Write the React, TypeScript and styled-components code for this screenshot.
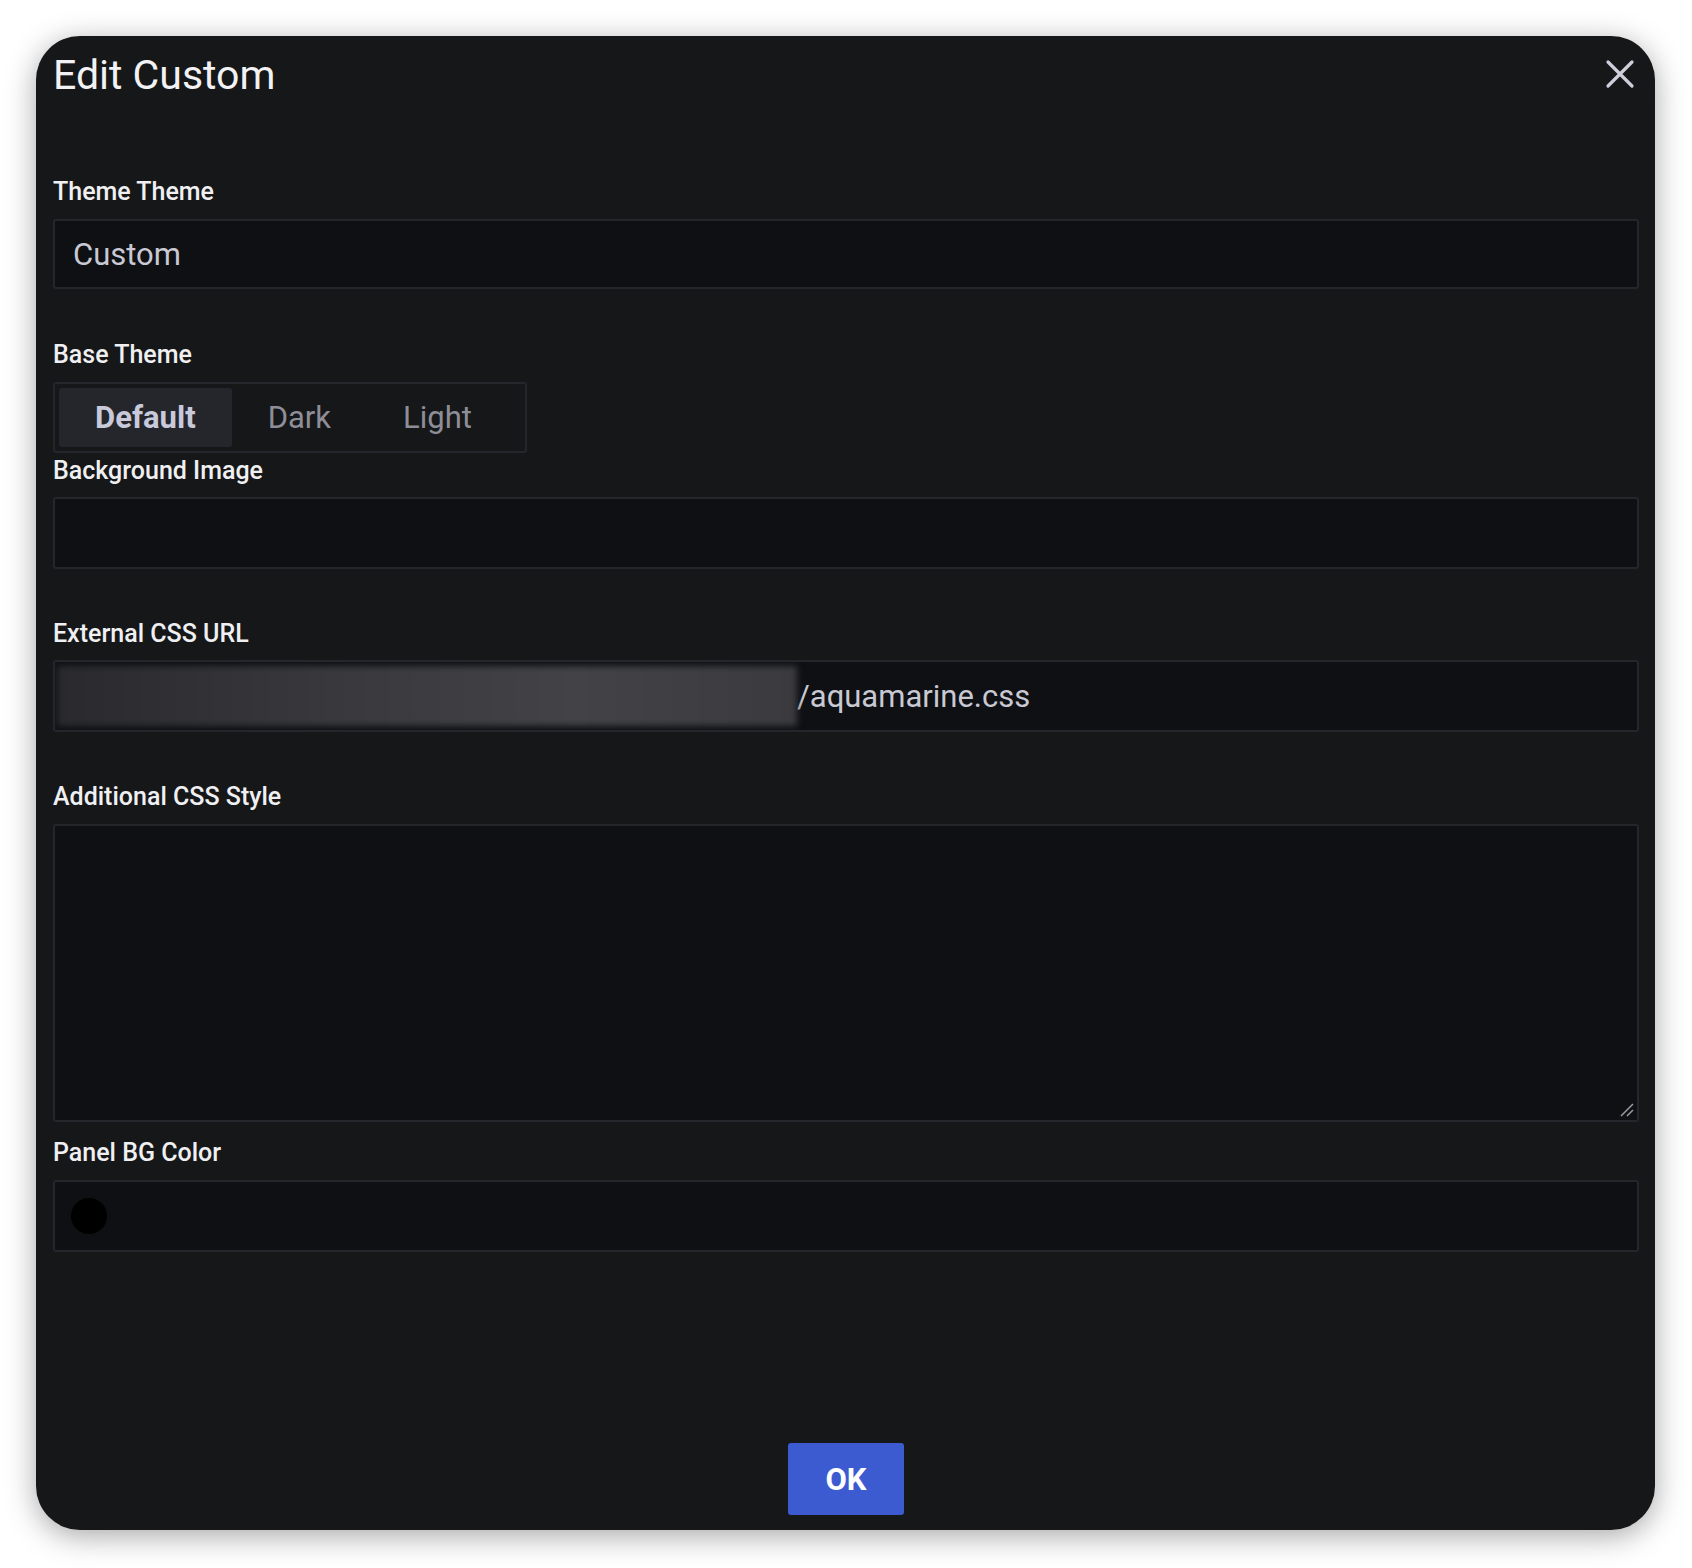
import React, { useState } from 'react';
import styled, { createGlobalStyle } from 'styled-components';

const GlobalStyle = createGlobalStyle`
  html, body {
    margin: 0;
    background: #ffffff;
    font-family: Roboto, "Liberation Sans", sans-serif;
  }
  * { box-sizing: border-box; }
`;

const Page = styled.div`
  padding: 36px 37px 38px 36px;
`;

const Modal = styled.div`
  height: 1494px;
  background: #161719;
  border-radius: 44px;
  box-shadow: 0 6px 30px rgba(0, 0, 0, 0.35);
  padding: 0 16px 15px 17px;
  display: flex;
  flex-direction: column;
`;

const Header = styled.div`
  height: 140px;
  display: flex;
  justify-content: space-between;
  align-items: flex-start;
  padding-top: 14px;
`;

const Title = styled.h1`
  margin: 0;
  font-size: 41px;
  font-weight: 400;
  color: #f2f2f4;
  line-height: 50px;
`;

const CloseButton = styled.button`
  background: none;
  border: none;
  padding: 0;
  margin: 9px 4px 0 0;
  width: 30px;
  height: 30px;
  cursor: pointer;
`;

const Field = styled.div<{ $top: number }>`
  margin-top: ${p => p.$top}px;
  display: flex;
  flex-direction: column;
`;

const Label = styled.label<{ $gap: number }>`
  font-size: 25px;
  font-weight: 500;
  line-height: 32px;
  color: #f0f0f2;
  margin-bottom: ${p => p.$gap}px;
`;

const Input = styled.div<{ $h?: number }>`
  height: ${p => p.$h ?? 72}px;
  background: #0f1014;
  border: 2px solid #25262b;
  border-radius: 3px;
  display: flex;
  align-items: center;
  font-size: 31px;
  color: #c9c9d3;
  position: relative;
  overflow: hidden;
`;

const InputText = styled.span<{ $pad: number }>`
  padding-left: ${p => p.$pad}px;
`;

const Blur = styled.div`
  width: 740px;
  height: 60px;
  margin-left: 2px;
  background: linear-gradient(90deg, #2a2a2e, #39393e 40%, #424247 70%, #3a3a3f);
  filter: blur(3px);
`;

const Segmented = styled.div`
  width: 474px;
  height: 71px;
  border: 2px solid #25262b;
  border-radius: 3px;
  padding: 4px;
  display: flex;
  gap: 0;
`;

const Segment = styled.button<{ $active: boolean }>`
  border: none;
  border-radius: 3px;
  background: ${p => (p.$active ? '#25262b' : 'transparent')};
  color: ${p => (p.$active ? '#c9c9dc' : '#8e8e98')};
  font-family: Roboto, "Liberation Sans", sans-serif;
  font-size: 31px;
  font-weight: ${p => (p.$active ? 700 : 400)};
  padding: 0 36px;
  height: 59px;
  cursor: pointer;
`;

const Resize = styled.svg`
  position: absolute;
  right: 3px;
  bottom: 3px;
`;

const Swatch = styled.span`
  width: 36px;
  height: 36px;
  border-radius: 50%;
  background: #000;
  margin-left: 16px;
`;

const Footer = styled.div`
  margin-top: auto;
  display: flex;
  justify-content: center;
`;

const OkButton = styled.button`
  width: 116px;
  height: 72px;
  background: #3d5bd0;
  border: none;
  border-radius: 3px;
  color: #ffffff;
  font-family: Roboto, "Liberation Sans", sans-serif;
  font-size: 31px;
  font-weight: 700;
  cursor: pointer;
`;

const themes = ['Default', 'Dark', 'Light'];

const App = () => {
  const [base, setBase] = useState('Default');

  return (
    <Page>
      <GlobalStyle />
      <Modal>
        <Header>
          <Title>Edit Custom</Title>
          <CloseButton aria-label="close">
            <svg width="30" height="30" viewBox="0 0 30 30">
              <path d="M3 3 L27 27 M27 3 L3 27" stroke="#cfcfdc" strokeWidth="3.2" strokeLinecap="round" />
            </svg>
          </CloseButton>
        </Header>

        <Field $top={0}>
          <Label $gap={11}>Theme Theme</Label>
          <Input $h={70}>
            <InputText $pad={18}>Custom</InputText>
          </Input>
        </Field>

        <Field $top={50}>
          <Label $gap={11}>Base Theme</Label>
          <Segmented>
            {themes.map(t => (
              <Segment key={t} $active={base === t} onClick={() => setBase(t)}>
                {t}
              </Segment>
            ))}
          </Segmented>
        </Field>

        <Field $top={2}>
          <Label $gap={10}>Background Image</Label>
          <Input />
        </Field>

        <Field $top={49}>
          <Label $gap={10}>External CSS URL</Label>
          <Input>
            <Blur />
            <InputText $pad={0}>/aquamarine.css</InputText>
          </Input>
        </Field>

        <Field $top={49}>
          <Label $gap={11}>Additional CSS Style</Label>
          <Input $h={298}>
            <Resize width="16" height="16" viewBox="0 0 16 16">
              <path d="M15 3 L3 15 M15 9 L9 15" stroke="#9a9aa4" strokeWidth="1.5" />
            </Resize>
          </Input>
        </Field>

        <Field $top={15}>
          <Label $gap={11}>Panel BG Color</Label>
          <Input>
            <Swatch />
          </Input>
        </Field>

        <Footer>
          <OkButton>OK</OkButton>
        </Footer>
      </Modal>
    </Page>
  );
};

export default App;
